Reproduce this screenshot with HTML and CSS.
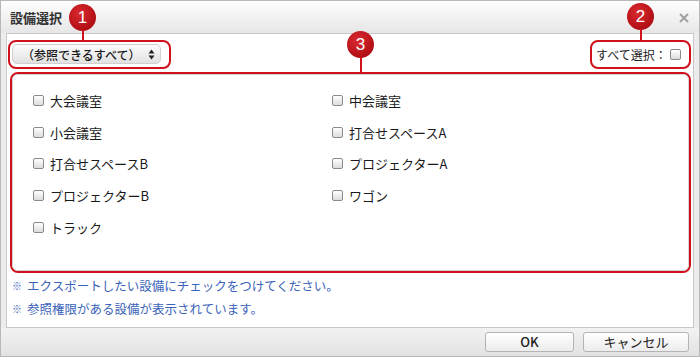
FILE: index.html
```html
<!DOCTYPE html>
<html lang="ja">
<head>
  <meta charset="UTF-8">
  <title>設備選択</title>
  <link rel="stylesheet" href="styles.css">
</head>
<body>
  <div class="dialog">
    <div class="titlebar">
      <span class="title">設備選択</span>
      <svg class="close" width="10" height="10" viewBox="0 0 10 10"><path d="M1 1L9 9M9 1L1 9" stroke="#a0a0a0" stroke-width="2"/></svg>
    </div>

    <div class="panel">
      <div class="toprow">
        <div class="mark mark-select">
          <div class="select">
            <span>（参照できるすべて）</span>
            <svg width="7" height="11" viewBox="0 0 7 11"><path d="M3.5 0.5L6.5 4.5H0.5Z M3.5 10.5L6.5 6.5H0.5Z" fill="#222"/></svg>
          </div>
        </div>
        <div class="mark mark-all">
          <label class="all">すべて選択：<input type="checkbox" class="cb"></label>
        </div>
      </div>

      <div class="mark mark-list">
        <div class="list">
          <label class="item"><input type="checkbox" class="cb">大会議室</label>
          <label class="item"><input type="checkbox" class="cb">中会議室</label>
          <label class="item"><input type="checkbox" class="cb">小会議室</label>
          <label class="item"><input type="checkbox" class="cb">打合せスペースA</label>
          <label class="item"><input type="checkbox" class="cb">打合せスペースB</label>
          <label class="item"><input type="checkbox" class="cb">プロジェクターA</label>
          <label class="item"><input type="checkbox" class="cb">プロジェクターB</label>
          <label class="item"><input type="checkbox" class="cb">ワゴン</label>
          <label class="item"><input type="checkbox" class="cb">トラック</label>
        </div>
      </div>

      <p class="note"><span class="kome">※</span>エクスポートしたい設備にチェックをつけてください。</p>
      <p class="note"><span class="kome">※</span>参照権限がある設備が表示されています。</p>
    </div>

    <div class="footer">
      <button class="btn btn-ok">OK</button>
      <button class="btn btn-cancel">キャンセル</button>
    </div>

    <div class="badge badge-1">1</div>
    <div class="stem stem-1"></div>
    <div class="badge badge-2">2</div>
    <div class="stem stem-2"></div>
    <div class="badge badge-3">3</div>
    <div class="stem stem-3"></div>
  </div>
</body>
</html>
```

FILE: styles.css
```css
body {
  margin: 0;
  font-family: "Noto Sans CJK JP", "Liberation Sans", sans-serif;
  color: #222;
}
.dialog {
  position: relative;
  width: 700px;
  height: 357px;
  box-sizing: border-box;
  border: 1px solid #b8b8b8;
  background: #ececec;
  display: flex;
  flex-direction: column;
}
.titlebar {
  height: 32px;
  padding: 0 10px 0 9px;
  display: flex;
  align-items: center;
  justify-content: space-between;
  background: linear-gradient(#fefefe, #e6e6e6);
}
.title {
  font-size: 13px;
  font-weight: bold;
  color: #333;
}
.close {
  margin-top: 2px;
}
.panel {
  height: 295px;
  box-sizing: border-box;
  margin: 0 5px;
  padding: 6px 2px 0 1px;
  border: 1px solid #c8c8c8;
  background: #fff;
}
.mark {
  border: 2px solid #d0101a;
  border-radius: 8px;
  box-sizing: border-box;
}
.toprow {
  display: flex;
  justify-content: space-between;
  height: 29px;
}
.mark-select {
  width: 163px;
  padding: 2px 0 0 2px;
}
.select {
  width: 149px;
  height: 20px;
  box-sizing: border-box;
  border-radius: 5px;
  border: 1px solid #d0d0d0;
  background: linear-gradient(#fbfbfb, #e2e2e2);
  display: flex;
  align-items: center;
  justify-content: space-between;
  padding: 0 5px 0 9px;
  font-size: 12px;
  font-weight: 500;
  color: #1a1a1a;
}
.mark-all {
  width: 101px;
  padding-left: 4px;
  display: flex;
  align-items: center;
}
.all {
  display: flex;
  align-items: center;
  font-size: 12px;
  color: #222;
}
.all .cb {
  margin-left: 3px;
}
.cb {
  appearance: none;
  -webkit-appearance: none;
  width: 11px;
  height: 11px;
  margin: 0;
  box-sizing: border-box;
  border: 1px solid #8a8a8a;
  border-radius: 2px;
  background: linear-gradient(#ffffff, #dcdcdc);
}
.mark-list {
  margin: 3px 0 0 2px;
  height: 201px;
}
.list {
  height: 100%;
  box-sizing: border-box;
  border: 1px solid #d4d4d4;
  border-radius: 6px;
  padding: 10px 0 0 20px;
  display: grid;
  grid-template-columns: 299px 1fr;
  grid-auto-rows: 31.6px;
  align-content: start;
}
.item {
  display: flex;
  align-items: center;
  font-size: 13px;
  color: #1a1a1a;
}
.item .cb {
  margin-right: 6px;
}
.note {
  margin: 1px 0 0 4px;
  height: 23px;
  line-height: 23px;
  font-size: 12.5px;
  color: #3a62b8;
}
.note + .note {
  margin-top: 0;
}
.kome {
  font-size: 10px;
  font-weight: bold;
  margin-right: 5px;
  vertical-align: 1px;
}
.footer {
  flex: 1;
  display: flex;
  justify-content: flex-end;
  gap: 9px;
  padding: 4px 10px 0 0;
  background: linear-gradient(#f2f2f2, #e2e2e2);
}
.btn {
  height: 20px;
  padding: 0;
  border: 1px solid #b4b4b4;
  border-radius: 3px;
  background: linear-gradient(#ffffff, #ececec);
  font-family: "Noto Sans CJK JP", "Liberation Sans", sans-serif;
  font-size: 13px;
  line-height: 18px;
  color: #222;
}
.btn-ok {
  width: 89px;
  font-weight: 500;
}
.btn-cancel {
  width: 106px;
}
.badge {
  position: absolute;
  width: 27px;
  height: 27px;
  border-radius: 50%;
  background: radial-gradient(circle at 40% 35%, #da2a2f, #b20f16 70%);
  color: #fff;
  font-family: "Liberation Sans", sans-serif;
  font-size: 17px;
  line-height: 27px;
  text-align: center;
}
.stem {
  position: absolute;
  width: 2px;
  background: #d0101a;
}
.badge-1 { left: 68px; top: 3px; }
.stem-1 { left: 81px; top: 29px; height: 11px; }
.badge-2 { left: 626px; top: 2px; }
.stem-2 { left: 639px; top: 28px; height: 12px; }
.badge-3 { left: 346px; top: 30px; }
.stem-3 { left: 359px; top: 56px; height: 15px; }
```
